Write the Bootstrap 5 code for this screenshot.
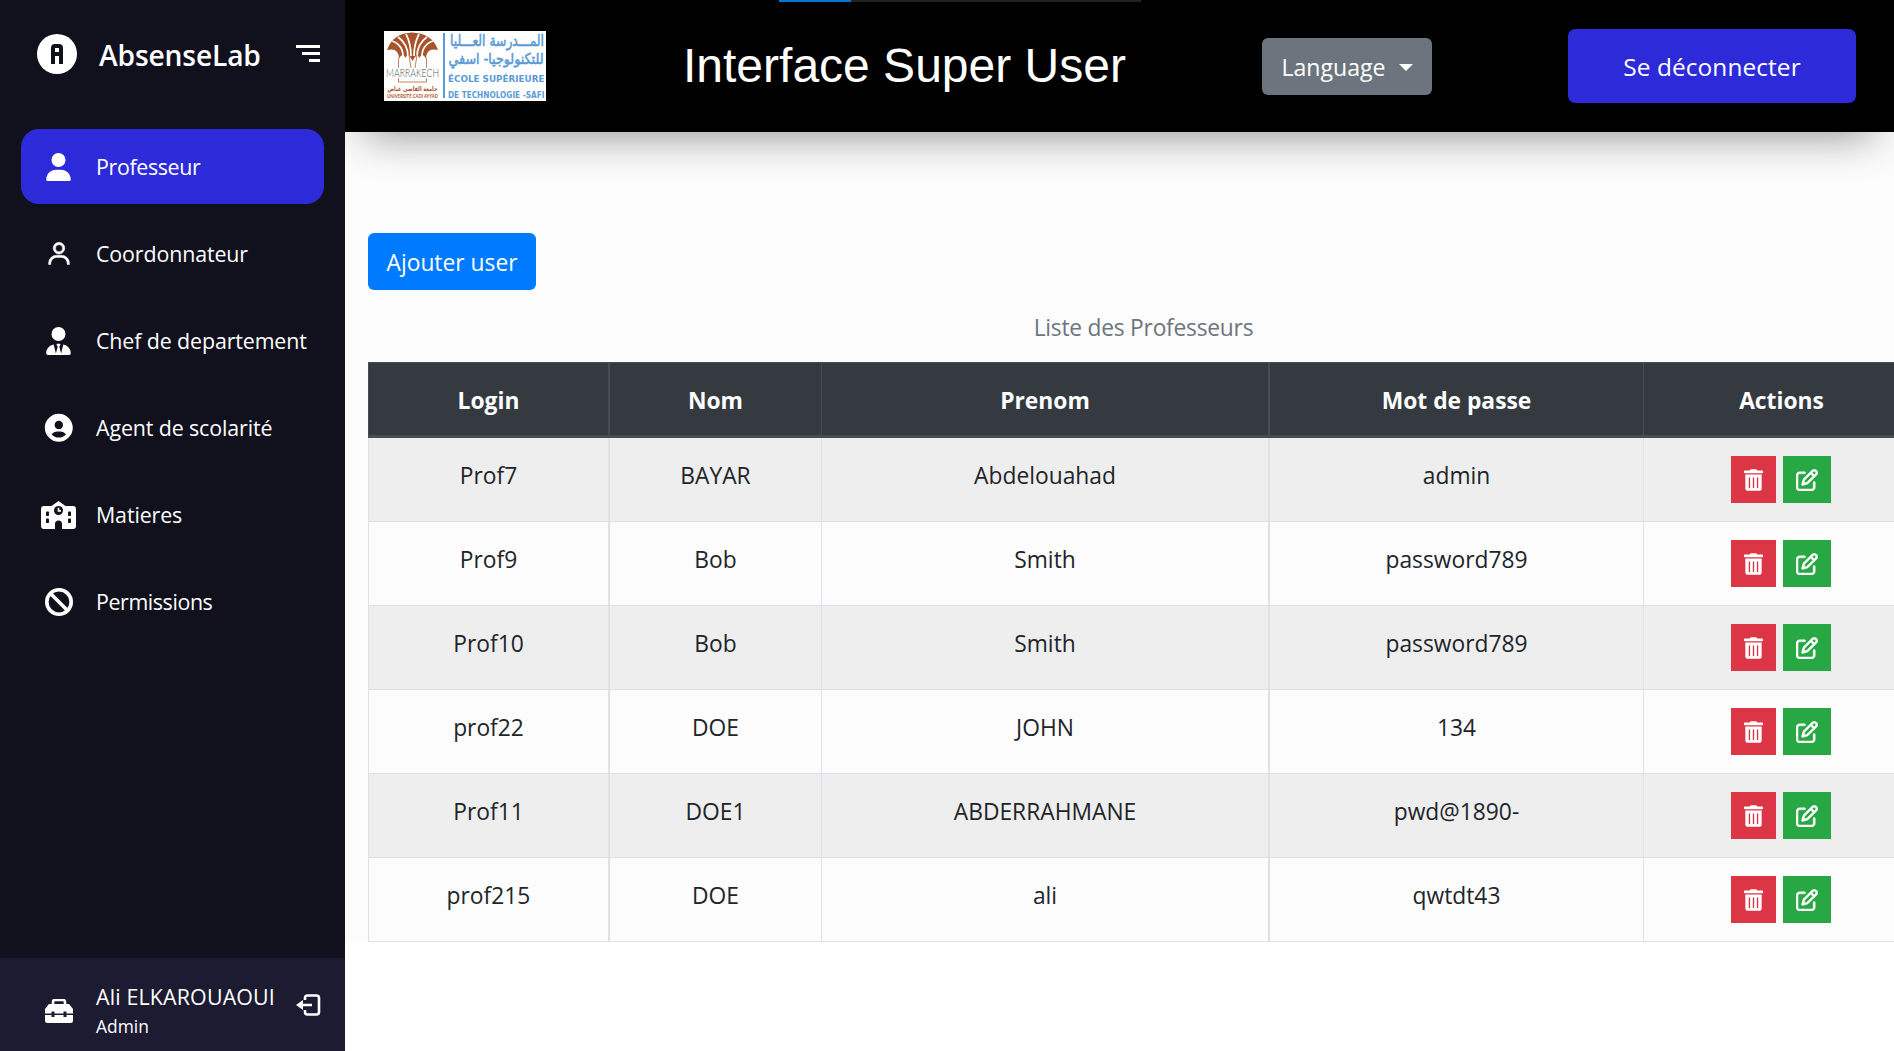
<!DOCTYPE html>
<html lang="fr">
<head>
<meta charset="utf-8">
<title>AbsenseLab</title>
<link href="https://cdn.jsdelivr.net/npm/bootstrap@5.3.0/dist/css/bootstrap.min.css" rel="stylesheet">
<style>
html,body{height:100%;overflow:hidden}
body{font-family:"Open Sans","Noto Sans",sans-serif;font-size:22.8px;line-height:36px;color:#212529;background:#fff}
.sidebar{width:345px;height:1051px;background:#11101d;color:#fff;z-index:1}
.brand{height:108px;padding:0 25px 0 37px}
.brand-name{font-size:28.2px;font-weight:600;margin-left:22px;letter-spacing:-.15px;padding-top:2px}
.side-nav{padding:21px 21px 0;gap:12px}
.side-link{height:75px;border-radius:18px;color:#fff;text-decoration:none;font-size:21.4px;white-space:nowrap;letter-spacing:-.12px}
.side-link.current{background:#2d2bd9;letter-spacing:-.35px}
.ico{width:75px;display:flex;justify-content:center;flex:none}
.side-foot{height:93px;background:#1d1b31;padding-left:21px}
.foot-name{font-size:21.4px;line-height:27px;padding-top:14px;letter-spacing:.15px}
.foot-role{font-size:17.4px;line-height:27px;padding-top:3px}
.topbar{height:132px;background:#000;position:relative;box-shadow:0 22px 45px -20px rgba(0,0,0,.45);padding:0 38px 0 39px}
.tab-progress{position:absolute;top:0;left:434px;width:362px;height:2px;background:#222}
.tab-progress div{width:72px;height:2px;background:#0078d4}
.page-title{font-family:"Liberation Sans",Arial,sans-serif;font-size:48px;line-height:58px;color:#fff;margin:0 0 1px 137px;width:446px;white-space:nowrap}
.btn-lang{width:170px;height:57px;border-radius:6px;background:#6c757d;color:#fff;font-size:23.1px;margin-left:133px;padding:3px 0 0;border:0}
.btn-lang::after{margin-left:13px;border-top-width:7px;border-left-width:7px;border-right-width:7px;vertical-align:5px}
.btn-out{width:288px;height:74px;border-radius:7px;background:#2d2bd9;color:#fff;font-size:24.4px;letter-spacing:.1px;border:0;padding:2px 0 0}
.workspace{height:810px;background:#fcfcfc;padding:101px 0 0 23px}
.btn-add{width:168px;height:57px;border-radius:6px;background:#007bff;color:#fff;font-size:22.8px;border:0;padding:3px 0 0}
.list-title{width:1551px;height:72px;padding-top:20px;color:#6c757d;text-align:center;letter-spacing:-.25px}
.prof-table{width:1551px;table-layout:fixed;border-collapse:separate;border-spacing:0;text-align:center;margin:0}
.prof-table th{height:76px;background:#343a40!important;color:#fff;font-weight:700;padding:20px 0 14px;border:solid #454d55;border-width:1px 0 3px 1px;vertical-align:top}
.prof-table td{height:84px;padding:20px 0 0;border:solid #dee2e6;border-width:0 0 1px 1px;background:#fcfcfc!important;color:#212529;vertical-align:top;box-shadow:none!important}
.prof-table tbody tr:nth-child(odd) td{background:#eee!important}
.prof-table tr>:nth-child(2),.prof-table tr>:nth-child(4){border-left-width:2px}
.prof-table td.acts{padding:18px 2px 0 0}
.act{height:47px;display:flex;align-items:center;justify-content:center}
.act-del{width:45px;background:#dc3545}
.act-edit{width:48px;background:#28a745}
</style>
</head>
<body>
<svg width="0" height="0" class="position-absolute">
<symbol id="trash" viewBox="0 0 448 512"><path d="M32 464a48 48 0 0 0 48 48h288a48 48 0 0 0 48-48V128H32zm272-256a16 16 0 0 1 32 0v224a16 16 0 0 1-32 0zm-96 0a16 16 0 0 1 32 0v224a16 16 0 0 1-32 0zm-96 0a16 16 0 0 1 32 0v224a16 16 0 0 1-32 0zM432 32H312l-9.4-18.7A24 24 0 0 0 281.1 0H166.8a23.72 23.72 0 0 0-21.4 13.3L136 32H16A16 16 0 0 0 0 48v32a16 16 0 0 0 16 16h416a16 16 0 0 0 16-16V48a16 16 0 0 0-16-16z"/></symbol>
<symbol id="edit" viewBox="0 0 512 512"><path stroke="#fff" stroke-width="10" d="M441 58.9L453.1 71c9.4 9.4 9.4 24.6 0 33.9L424 134.1 377.9 88 407 58.9c9.4-9.4 24.6-9.4 33.9 0zM209.8 256.2L344 121.9 390.1 168 255.8 302.2c-2.9 2.9-6.5 5-10.4 6.1l-58.5 16.7 16.7-58.5c1.1-3.9 3.2-7.5 6.1-10.4zM373.1 25L175.8 222.2c-8.7 8.7-15 19.4-18.3 31.1l-28.6 100c-2.4 8.4-.1 17.4 6.1 23.6s15.2 8.5 23.6 6.1l100-28.6c11.8-3.4 22.5-9.7 31.1-18.3L487 138.9c28.1-28.1 28.1-73.7 0-101.8L474.9 25C446.8-3.1 401.2-3.1 373.1 25zM88 64C39.4 64 0 103.4 0 152V424c0 48.6 39.4 88 88 88H360c48.6 0 88-39.4 88-88V312c0-13.3-10.7-24-24-24s-24 10.7-24 24V424c0 22.1-17.9 40-40 40H88c-22.1 0-40-17.9-40-40V152c0-22.1 17.9-40 40-40H200c13.3 0 24-10.7 24-24s-10.7-24-24-24H88z"/></symbol>
</svg>
<div class="d-flex">
  <aside class="sidebar d-flex flex-column flex-shrink-0">
    <div class="brand d-flex align-items-center">
      <svg width="40" height="40" viewBox="0 0 40 40"><circle cx="20" cy="20" r="20" fill="#fff"/><path fill="#11101d" fill-rule="evenodd" d="M14 30V14q0-4 4-4h4q4 0 4 4v16h-4v-8h-4v8zM18 14v4h4v-4z"/></svg>
      <span class="brand-name">AbsenseLab</span>
      <svg class="ms-auto" width="25" height="20" viewBox="0 0 25 20" fill="#fff"><path d="M1 1h24v3H1zM7 8h18v3H7zM14 15h11v3H14z"/></svg>
    </div>
    <nav class="side-nav d-flex flex-column flex-grow-1">
      <a class="side-link current d-flex align-items-center"><span class="ico"><svg width="25" height="28" viewBox="0 0 448 512" fill="#fff"><path d="M224 256A128 128 0 1 0 224 0a128 128 0 1 0 0 256zm-45.700 48C79.800 304 0 383.800 0 482.300C0 498.700 13.300 512 29.700 512H418.300c16.400 0 29.700-13.300 29.700-29.700C448 383.800 368.200 304 269.700 304H178.300z"/></svg></span>Professeur</a>
      <a class="side-link d-flex align-items-center"><span class="ico"><svg width="28" height="28" viewBox="0 0 24 24" fill="#fff" stroke="#fff" stroke-width=".4"><path d="M12 2a5 5 0 1 0 5 5 5 5 0 0 0-5-5zm0 8a3 3 0 1 1 3-3 3 3 0 0 1-3 3zm9 11v-1a7 7 0 0 0-7-7h-4a7 7 0 0 0-7 7v1h2v-1a5 5 0 0 1 5-5h4a5 5 0 0 1 5 5v1z"/></svg></span>Coordonnateur</a>
      <a class="side-link d-flex align-items-center"><span class="ico"><svg width="25" height="28" viewBox="0 0 448 512" fill="#fff"><path d="M224 256A128 128 0 1 1 224 0a128 128 0 1 1 0 256zM209.100 359.200l-18.600-31c-6.400-10.700 1.300-24.200 13.700-24.200H224h19.700c12.400 0 20.100 13.600 13.700 24.200l-18.600 31 33.400 123.900 39.500-161.200c77.200 12 136.300 78.800 136.300 159.400c0 17-13.800 30.700-30.700 30.700H265.100 182.900 30.700C13.800 512 0 498.200 0 481.300c0-80.600 59.100-147.400 136.300-159.400l39.500 161.200 33.400-123.900z"/></svg></span>Chef de departement</a>
      <a class="side-link d-flex align-items-center"><span class="ico"><svg width="33.600" height="33.600" viewBox="0 0 24 24" fill="#fff"><path d="M12 2C6.579 2 2 6.579 2 12s4.579 10 10 10 10-4.579 10-10S17.421 2 12 2zm0 5c1.727 0 3 1.272 3 3s-1.273 3-3 3c-1.726 0-3-1.272-3-3s1.274-3 3-3zm-5.106 9.772c.897-1.320 2.393-2.200 4.106-2.200h2c1.714 0 3.209.880 4.106 2.200C15.828 18.140 14.015 19 12 19s-3.828-.860-5.106-2.228z"/></svg></span>Agent de scolarité</a>
      <a class="side-link d-flex align-items-center"><span class="ico"><svg width="35" height="28" viewBox="0 0 35 28"><path fill="#fff" d="M3 5h7.500L17.500 0l7 5H32q3 0 3 3v17q0 3-3 3H21v-5a3.500 3.500 0 0 0-7 0v5H3q-3 0-3-3V8q0-3 3-3z"/><g fill="#11101d"><rect x="5" y="10.500" width="3" height="4.500" rx=".8"/><rect x="5" y="17.500" width="3" height="4.500" rx=".8"/><rect x="27" y="10.500" width="3" height="4.500" rx=".8"/><rect x="27" y="17.500" width="3" height="4.500" rx=".8"/><circle cx="17.500" cy="9.500" r="4.500"/></g><path d="M17.500 6.800v3h2.500" fill="none" stroke="#fff" stroke-width="1.700"/></svg></span>Matieres</a>
      <a class="side-link d-flex align-items-center"><span class="ico"><svg width="28" height="28" viewBox="0 0 28 28" fill="none" stroke="#fff" stroke-width="3.600"><circle cx="14" cy="14" r="12.200"/><path d="M5.500 5.500l17 17"/></svg></span><span style="letter-spacing:-.4px">Permissions</span></a>
    </nav>
    <div class="side-foot d-flex align-items-center">
      <span class="ico"><svg width="28" height="24" viewBox="0 0 28 24" style="margin-top:13px"><path d="M8 6V3q0-2 2-2h8q2 0 2 2v3" fill="none" stroke="#fff" stroke-width="2.600"/><path fill="#fff" d="M4 5h20l4 5v4.500h-6.500v-2h-3v2h-9v-2h-3v2H0V10zM0 16h6.500v2h3v-2h9v2h3v-2H28v5.500q0 2.500-2.500 2.500h-23Q0 24 0 21.500z"/></svg></span>
      <div><div class="foot-name">Ali ELKAROUAOUI</div><div class="foot-role">Admin</div></div>
      <svg class="ms-auto me-4" width="25" height="22" viewBox="0 0 25 22"><path d="M9 6V4q0-2.500 2.500-2.500h9Q23 1.500 23 4v14q0 2.500-2.500 2.500h-9Q9 20.500 9 18v-2M6 11h10" fill="none" stroke="#fff" stroke-width="2.600"/><path d="M0 11l7-5v10z" fill="#fff"/></svg>
    </div>
  </aside>
  <main class="flex-grow-1 overflow-hidden">
    <header class="topbar d-flex align-items-center">
      <div class="tab-progress"><div></div></div>
      <svg width="162" height="70" viewBox="0 0 162 70" class="flex-shrink-0 overflow-visible">
        <rect width="162" height="70" fill="#fff"/>
        <path d="M3 19Q9 2 28 1.500Q48 2 54 19q-12-3-12 9q-3-7-7-1q-1-6-6.500 3Q23 20 22 27q-4-6-7 1q0-12-12-9z" fill="#a9532c"/>
        <path d="M8 10q12 4 11 18M14 6q10 7 10 20M22 3q5 10 5 22M49 10q-12 4-11 18M43 6Q33 13 33 26M35 3q-5 10-5 22" stroke="#fff" stroke-width="1.700" fill="none"/>
        <path d="M14.500 27v10M42.500 27v10M14.500 47v4h28v-4M25 24l2 13M33 24l-2 13" stroke="#c28464" fill="none"/>
        <g font-family="Lato,sans-serif"><text x="2" y="46" font-size="11.500" font-weight="300" textLength="53" lengthAdjust="spacingAndGlyphs" fill="#555">MARRAKECH</text>
        <text x="3" y="67" font-size="5.400" font-weight="700" textLength="51" lengthAdjust="spacingAndGlyphs" fill="#a9532c">UNIVERSITÉ CADI AYYAD</text></g>
        <g font-family="DejaVu Sans,sans-serif"><text x="28.500" y="59.500" text-anchor="middle" font-size="6.500" font-weight="700" textLength="50" lengthAdjust="spacingAndGlyphs" fill="#a9532c">جامعة القاضي عياض</text>
        <g fill="#5b9bd5"><rect x="59" y="2" width="2" height="65"/>
        <text x="113" y="14.500" text-anchor="middle" font-size="16" textLength="94" lengthAdjust="spacingAndGlyphs" stroke="#5b9bd5" stroke-width=".6">المـــدرسة العـــليا</text>
        <text x="112" y="33" text-anchor="middle" font-size="15" textLength="95" lengthAdjust="spacingAndGlyphs" stroke="#5b9bd5" stroke-width=".6">للتكنولوجيا- اسفي</text>
        <text x="64" y="51" font-size="9.400" font-weight="700" textLength="96.500" lengthAdjust="spacingAndGlyphs">ÉCOLE SUPÉRIEURE</text>
        <text x="64" y="66.500" font-size="8" font-weight="700" textLength="96.500" lengthAdjust="spacingAndGlyphs">DE TECHNOLOGIE -SAFI</text></g></g>
      </svg>
      <h1 class="page-title">Interface Super User</h1>
      <button class="btn btn-lang dropdown-toggle">Language</button>
      <button class="btn btn-out ms-auto">Se déconnecter</button>
    </header>
    <section class="workspace">
      <button class="btn btn-add d-block">Ajouter user</button>
      <div class="list-title">Liste des Professeurs</div>
      <table class="table prof-table">
        <colgroup><col style="width:240px"><col style="width:213px"><col style="width:447px"><col style="width:375px"><col></colgroup>
        <thead><tr><th>Login</th><th>Nom</th><th>Prenom</th><th>Mot de passe</th><th>Actions</th></tr></thead>
        <tbody id="rows"></tbody>
      </table>
    </section>
  </main>
</div>
<script>
var profs=[["Prof7","BAYAR","Abdelouahad","admin"],["Prof9","Bob","Smith","password789"],["Prof10","Bob","Smith","password789"],["prof22","DOE","JOHN","134"],["Prof11","DOE1","ABDERRAHMANE","pwd@1890-"],["prof215","DOE","ali","qwtdt43"]];
document.getElementById("rows").innerHTML=profs.map(function(p){
  return "<tr>"+p.map(function(c){return "<td>"+c+"</td>"}).join("")+'<td class="acts"><div class="d-flex justify-content-center" style="gap:7px"><span class="act act-del"><svg width="19" height="22" fill="#fff"><use href="#trash"/></svg></span><span class="act act-edit"><svg width="22" height="22" fill="#fff"><use href="#edit"/></svg></span></div></td></tr>';
}).join("");
</script>
<script src="https://cdn.jsdelivr.net/npm/bootstrap@5.3.0/dist/js/bootstrap.bundle.min.js"></script>
</body>
</html>
